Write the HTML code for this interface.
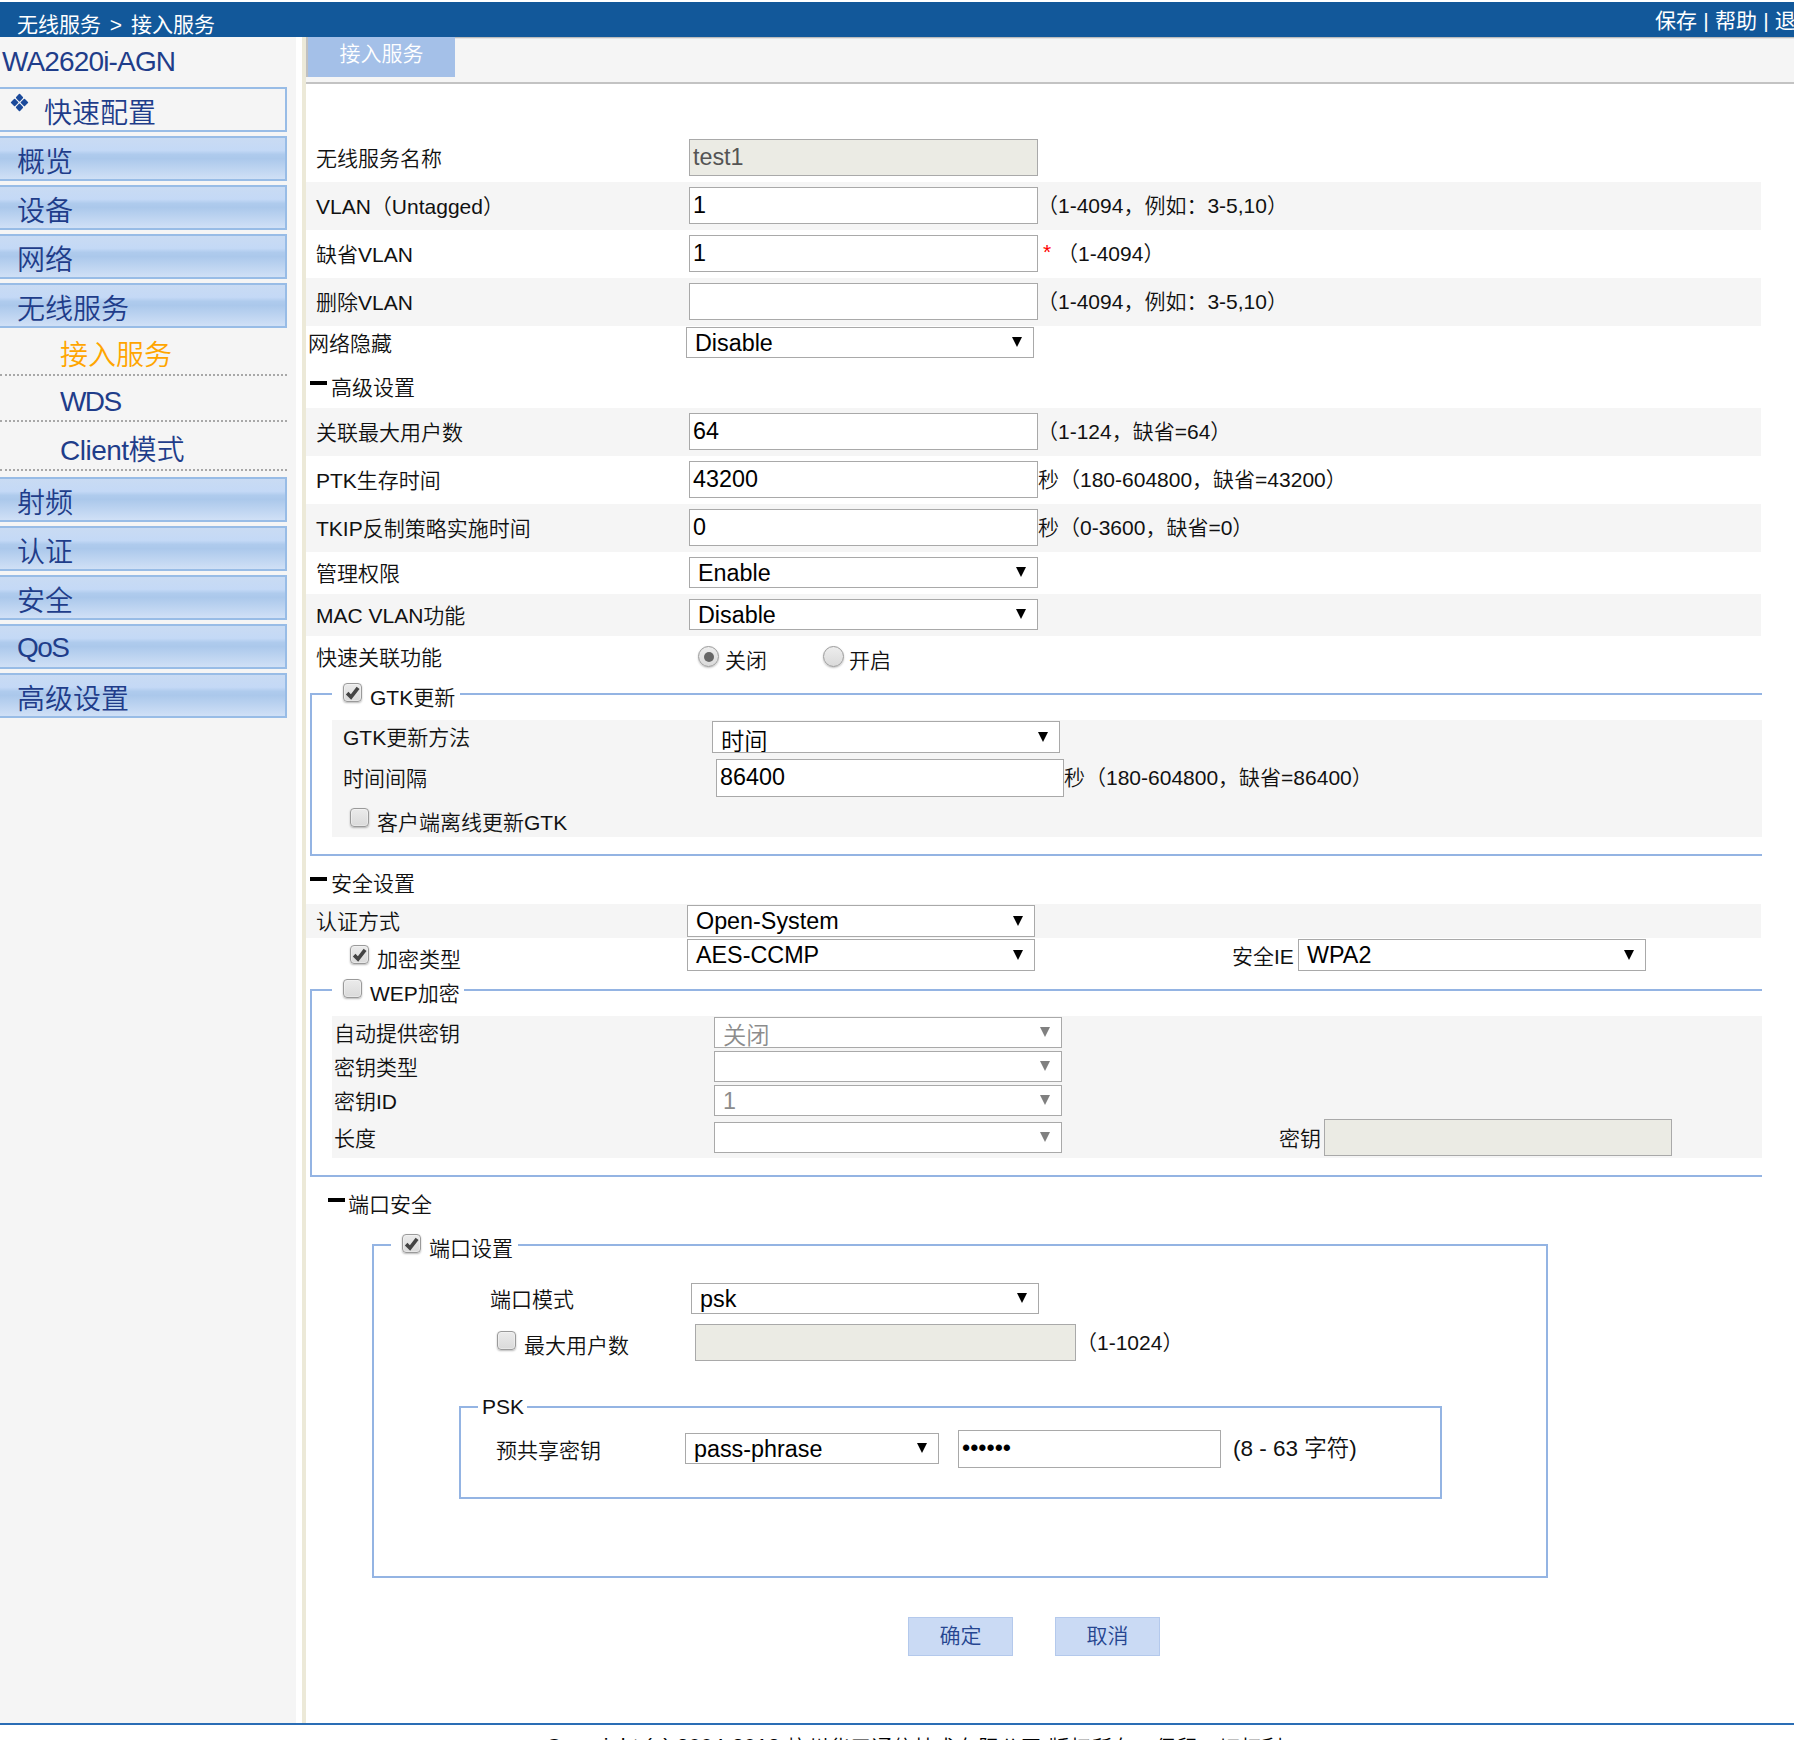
<!DOCTYPE html><html lang="zh-CN"><head><meta charset="utf-8"><title>接入服务</title><style>
*{box-sizing:border-box;margin:0;padding:0}
html,body{width:1794px;height:1740px;overflow:hidden;background:#fff}
body{position:relative;font-family:"Liberation Sans","Noto Sans CJK SC",sans-serif;font-size:21px;color:#000;font-weight:350}
.a{position:absolute;white-space:nowrap}
.t{position:absolute;white-space:nowrap;font-size:21px;line-height:30px;height:30px;color:#111}
.row{position:absolute;left:306px;width:1455px;background:#f5f5f5}
.inp{position:absolute;border:1px solid #a9a9a9;background:#fff;font-size:23.33px;line-height:32px;padding-left:3px;color:#000;white-space:nowrap;overflow:hidden}
.inp.dis{background:#ebebe4;color:#545454}
.sel{position:absolute;border:1px solid #a9a9a9;background:#fff;font-size:23.33px;line-height:28px;padding-left:8px;color:#000;white-space:nowrap;overflow:hidden}
.sel.dis{color:#8c8c8c}
.sel i{position:absolute;right:10.7px;top:50%;margin-top:-5.5px;width:0;height:0;border-left:5.3px solid transparent;border-right:5.3px solid transparent;border-top:10px solid #000}
.sel.dis i{border-top-color:#808080}
.menu{position:absolute;left:0;width:287px;height:45px;border:2px solid #98bce6;border-left:none;background:linear-gradient(#c9dbf3 0%,#c4d9f6 30%,#afcbed 40%,#abc8eb 50%,#b4ceee 62%,#d0e0f6 100%);font-size:28px;line-height:50px;color:#1f3d8a;padding-left:17px;white-space:nowrap}
.sub{position:absolute;left:60px;font-size:28px;line-height:40px;color:#1f3d8a;white-space:nowrap}
.dot{position:absolute;left:0;width:287px;height:0;border-top:2px dotted #a8a8a8}
.cb{position:absolute;width:19px;height:19px;border:1px solid #9a9a9a;border-radius:4px;background:linear-gradient(#ebebeb,#dadada);box-shadow:0 1px 2px rgba(0,0,0,.28),inset 0 0 0 1px rgba(255,255,255,.35)}
.cb svg{position:absolute;left:1px;top:1px;width:15px;height:15px}
.rd{position:absolute;width:21px;height:21px;border:1px solid #9a9a9a;border-radius:50%;background:linear-gradient(#ededed,#dadada);box-shadow:0 1px 2px rgba(0,0,0,.25)}
.rd b{position:absolute;left:4.5px;top:4.5px;width:10px;height:10px;border-radius:50%;background:#666}
.fs{position:absolute;border:2px solid #94b4e3}
.lg{position:absolute;background:#fff;height:30px}
.btn{position:absolute;width:105px;height:39px;background:#cadaf4;border:1px solid #b4c9ec;color:#254590;font-size:21px;line-height:35px;text-align:center}
.minus{position:absolute;width:17px;height:4px;background:#000}
</style></head><body>
<div class="a" style="left:0;top:2px;width:1794px;height:35px;background:#12589a;overflow:hidden"><div class="a" style="left:17px;top:7px;font-size:21px;line-height:32px;color:#fff;word-spacing:3px;font-weight:400">无线服务 &gt; 接入服务</div><div class="a" style="left:1655px;top:3px;font-size:21px;line-height:32px;color:#fff;word-spacing:0.4px;font-weight:400">保存 | 帮助 | 退出</div></div>
<div class="a" style="left:0;top:37px;width:296px;height:1686px;background:#f5f5f5"></div>
<div class="a" style="left:302px;top:37px;width:4px;height:1686px;background:#ece9d8"></div>
<div class="a" style="left:306px;top:37px;width:1488px;height:47px;background:#f5f5f5;border-top:1px solid #bcbcbc;box-shadow:inset 0 1px 0 #e4e4e4;border-bottom:2px solid #c3c3c3"></div>
<div class="a" style="left:306px;top:37px;width:2px;height:40px;background:#c0c0c0"></div>
<div class="a" style="left:308px;top:37px;width:147px;height:40px;background:#a4c0e8;color:#fff;font-size:21px;line-height:34px;text-align:center">接入服务</div>
<div class="a" style="left:2px;top:42px;font-size:28px;line-height:40px;color:#1f3d8a;letter-spacing:-0.85px">WA2620i-AGN</div>
<div class="a" style="left:0;top:87px;width:287px;height:45px;border:2px solid #98bce6;border-left:none;background:#f5f5f5"></div>
<svg class="a" style="left:10px;top:93px" width="19" height="19" viewBox="0 0 19 19"><g fill="#1b4a9b" stroke="#1b4a9b" stroke-width="1.6" stroke-linejoin="round"><path d="M9.5 1.6 L12.3 4.6 L9.5 7.6 L6.7 4.6Z"/><path d="M9.5 11.4 L12.3 14.4 L9.5 17.4 L6.7 14.4Z"/><path d="M4.6 6.5 L7.6 9.5 L4.6 12.5 L1.6 9.5Z"/><path d="M14.4 6.5 L17.4 9.5 L14.4 12.5 L11.4 9.5Z"/></g></svg>
<div class="a" style="left:44px;top:94px;font-size:28px;line-height:40px;color:#1f3d8a">快速配置</div>
<div class="menu" style="top:136px">概览</div>
<div class="menu" style="top:185px">设备</div>
<div class="menu" style="top:234px">网络</div>
<div class="menu" style="top:283px">无线服务</div>
<div class="menu" style="top:477px">射频</div>
<div class="menu" style="top:526px">认证</div>
<div class="menu" style="top:575px">安全</div>
<div class="menu" style="top:624px"><span style="position:relative;top:-3px;letter-spacing:-1.5px">QoS</span></div>
<div class="menu" style="top:673px">高级设置</div>
<div class="sub" style="top:336px;color:#ffa500">接入服务</div>
<div class="dot" style="top:374px"></div>
<div class="sub" style="top:382px;letter-spacing:-1.6px">WDS</div>
<div class="dot" style="top:420px"></div>
<div class="sub" style="top:431px"><span style="letter-spacing:-0.5px">Client</span>模式</div>
<div class="dot" style="top:469px"></div>
<div class="a" style="left:306px;top:182px;width:1455px;height:48px;background:#f5f5f5"></div>
<div class="a" style="left:306px;top:278px;width:1455px;height:48px;background:#f5f5f5"></div>
<div class="t" style="left:316px;top:144px;">无线服务名称</div>
<div class="inp dis" style="left:689px;top:139px;width:349px;height:37px;line-height:34px;">test1</div>
<div class="t" style="left:316px;top:192px;">VLAN（Untagged）</div>
<div class="inp" style="left:689px;top:187px;width:349px;height:37px;line-height:34px;">1</div>
<div class="t" style="left:1037px;top:191px;">（1-4094，例如：3-5,10）</div>
<div class="t" style="left:316px;top:240px;">缺省VLAN</div>
<div class="inp" style="left:689px;top:235px;width:349px;height:37px;line-height:34px;">1</div>
<div class="t" style="left:1043px;top:237px;"><span style="color:#f00;font-size:21px">*</span></div>
<div class="t" style="left:1057px;top:239px;">（1-4094）</div>
<div class="t" style="left:316px;top:288px;">删除VLAN</div>
<div class="inp" style="left:689px;top:283px;width:349px;height:37px;line-height:34px;"></div>
<div class="t" style="left:1037px;top:287px;">（1-4094，例如：3-5,10）</div>
<div class="t" style="left:308px;top:329px;">网络隐藏</div>
<div class="sel" style="left:686px;top:327px;width:348px;height:31px;line-height:30px;">Disable<i></i></div>
<div class="minus" style="left:310px;top:381px"></div>
<div class="t" style="left:331px;top:373px;">高级设置</div>
<div class="a" style="left:306px;top:408px;width:1455px;height:48px;background:#f5f5f5"></div>
<div class="a" style="left:306px;top:504px;width:1455px;height:48px;background:#f5f5f5"></div>
<div class="a" style="left:306px;top:594px;width:1455px;height:42px;background:#f5f5f5"></div>
<div class="t" style="left:316px;top:418px;">关联最大用户数</div>
<div class="inp" style="left:689px;top:413px;width:349px;height:37px;line-height:34px;">64</div>
<div class="t" style="left:1037px;top:417px;">（1-124，缺省=64）</div>
<div class="t" style="left:316px;top:466px;">PTK生存时间</div>
<div class="inp" style="left:689px;top:461px;width:349px;height:37px;line-height:34px;">43200</div>
<div class="t" style="left:1038px;top:465px;">秒（180-604800，缺省=43200）</div>
<div class="t" style="left:316px;top:514px;">TKIP反制策略实施时间</div>
<div class="inp" style="left:689px;top:509px;width:349px;height:37px;line-height:34px;">0</div>
<div class="t" style="left:1038px;top:513px;">秒（0-3600，缺省=0）</div>
<div class="t" style="left:316px;top:559px;">管理权限</div>
<div class="sel" style="left:689px;top:557px;width:349px;height:31px;line-height:30px;">Enable<i></i></div>
<div class="t" style="left:316px;top:601px;">MAC VLAN功能</div>
<div class="sel" style="left:689px;top:599px;width:349px;height:31px;line-height:30px;">Disable<i></i></div>
<div class="t" style="left:316px;top:643px;">快速关联功能</div>
<div class="rd" style="left:698px;top:646px"><b></b></div>
<div class="t" style="left:725px;top:646px;">关闭</div>
<div class="rd" style="left:823px;top:646px"></div>
<div class="t" style="left:849px;top:646px;">开启</div>
<div class="fs" style="left:310px;top:693px;width:1460px;height:163px;border-right:none"></div>
<div class="a" style="left:1762px;top:680px;width:32px;height:200px;background:#fff"></div>
<div class="lg" style="left:332px;top:680px;width:128px"></div>
<div class="cb" style="left:343px;top:683px"><svg viewBox="0 0 14 14"><path d="M2 7.6 L5.6 11.2 L12.2 2.6" fill="none" stroke="#444" stroke-width="3.4" stroke-linecap="butt" stroke-linejoin="miter"/></svg></div>
<div class="t" style="left:370px;top:683px;">GTK更新</div>
<div class="a" style="left:332px;top:720px;width:1430px;height:117px;background:#f5f5f5"></div>
<div class="t" style="left:343px;top:723px;">GTK更新方法</div>
<div class="sel" style="left:712px;top:721px;width:348px;height:32px;line-height:31px;"><span style="position:relative;top:5px">时间</span><i></i></div>
<div class="t" style="left:343px;top:764px;">时间间隔</div>
<div class="inp" style="left:716px;top:759px;width:348px;height:38px;line-height:35px;">86400</div>
<div class="t" style="left:1064px;top:763px;">秒（180-604800，缺省=86400）</div>
<div class="cb" style="left:350px;top:808px"></div>
<div class="t" style="left:377px;top:808px;">客户端离线更新GTK</div>
<div class="minus" style="left:310px;top:877px"></div>
<div class="t" style="left:331px;top:869px;">安全设置</div>
<div class="a" style="left:306px;top:904px;width:1455px;height:34px;background:#f5f5f5"></div>
<div class="t" style="left:316px;top:907px;">认证方式</div>
<div class="sel" style="left:687px;top:905px;width:348px;height:32px;line-height:31px;">Open-System<i></i></div>
<div class="cb" style="left:350px;top:945px"><svg viewBox="0 0 14 14"><path d="M2 7.6 L5.6 11.2 L12.2 2.6" fill="none" stroke="#444" stroke-width="3.4" stroke-linecap="butt" stroke-linejoin="miter"/></svg></div>
<div class="t" style="left:377px;top:945px;">加密类型</div>
<div class="sel" style="left:687px;top:939px;width:348px;height:32px;line-height:31px;">AES-CCMP<i></i></div>
<div class="t" style="left:1232px;top:942px;">安全IE</div>
<div class="sel" style="left:1298px;top:939px;width:348px;height:32px;line-height:31px;">WPA2<i></i></div>
<div class="fs" style="left:310px;top:989px;width:1460px;height:188px;border-right:none"></div>
<div class="a" style="left:1762px;top:975px;width:32px;height:220px;background:#fff"></div>
<div class="lg" style="left:332px;top:975px;width:132px"></div>
<div class="cb" style="left:343px;top:979px"></div>
<div class="t" style="left:370px;top:979px;">WEP加密</div>
<div class="a" style="left:332px;top:1016px;width:1430px;height:142px;background:#f5f5f5"></div>
<div class="t" style="left:334px;top:1019px;">自动提供密钥</div>
<div class="sel dis" style="left:714px;top:1017px;width:348px;height:31px;line-height:30px;"><span style="position:relative;top:3px">关闭</span><i></i></div>
<div class="t" style="left:334px;top:1053px;">密钥类型</div>
<div class="sel dis" style="left:714px;top:1051px;width:348px;height:31px;line-height:30px;"><i></i></div>
<div class="t" style="left:334px;top:1087px;">密钥ID</div>
<div class="sel dis" style="left:714px;top:1085px;width:348px;height:31px;line-height:30px;">1<i></i></div>
<div class="t" style="left:334px;top:1124px;">长度</div>
<div class="sel dis" style="left:714px;top:1122px;width:348px;height:31px;line-height:30px;"><i></i></div>
<div class="t" style="left:1279px;top:1124px;">密钥</div>
<div class="inp dis" style="left:1324px;top:1119px;width:348px;height:37px;line-height:34px;"></div>
<div class="minus" style="left:328px;top:1198px"></div>
<div class="t" style="left:348px;top:1190px;">端口安全</div>
<div class="fs" style="left:372px;top:1244px;width:1176px;height:334px"></div>
<div class="lg" style="left:391px;top:1230px;width:127px"></div>
<div class="cb" style="left:402px;top:1234px"><svg viewBox="0 0 14 14"><path d="M2 7.6 L5.6 11.2 L12.2 2.6" fill="none" stroke="#444" stroke-width="3.4" stroke-linecap="butt" stroke-linejoin="miter"/></svg></div>
<div class="t" style="left:429px;top:1234px;">端口设置</div>
<div class="t" style="left:490px;top:1285px;">端口模式</div>
<div class="sel" style="left:691px;top:1283px;width:348px;height:31px;line-height:30px;">psk<i></i></div>
<div class="cb" style="left:497px;top:1331px"></div>
<div class="t" style="left:524px;top:1331px;">最大用户数</div>
<div class="inp dis" style="left:695px;top:1324px;width:381px;height:37px;line-height:34px;"></div>
<div class="t" style="left:1076px;top:1328px;">（1-1024）</div>
<div class="fs" style="left:459px;top:1406px;width:983px;height:93px"></div>
<div class="lg" style="left:478px;top:1392px;width:49px"></div>
<div class="t" style="left:482px;top:1392px;">PSK</div>
<div class="t" style="left:496px;top:1436px;">预共享密钥</div>
<div class="sel" style="left:685px;top:1433px;width:254px;height:31px;line-height:30px;">pass-phrase<i></i></div>
<div class="inp" style="left:958px;top:1430px;width:263px;height:38px;line-height:35px;">••••••</div>
<div class="t" style="left:1233px;top:1434px;font-size:22.5px">(8 - 63 字符)</div>
<div class="btn" style="left:908px;top:1617px">确定</div>
<div class="btn" style="left:1055px;top:1617px">取消</div>
<div class="a" style="left:0;top:1723px;width:1794px;height:2px;background:#2a6db5"></div>
<div class="a" style="left:546px;top:1732.5px;font-size:21px;line-height:30px;color:#000;letter-spacing:0.33px"><span style="position:relative;top:-2px">Copyright (c) 2004-2013 </span>杭州华三通信技术有限公司 版权所有，保留一切权利。</div>
</body></html>
